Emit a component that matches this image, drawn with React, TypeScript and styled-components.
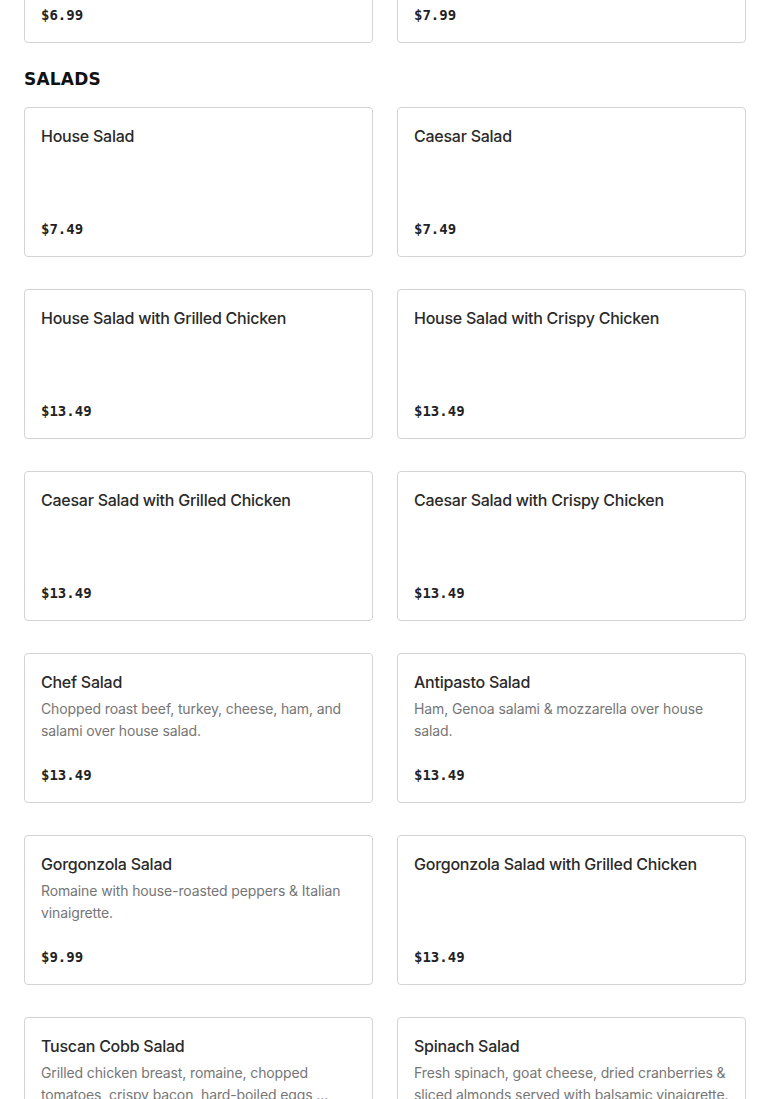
import React from "react";
import styled, { createGlobalStyle } from "styled-components";

const GlobalStyle = createGlobalStyle`
  html, body {
    margin: 0;
    padding: 0;
    background: #ffffff;
  }
  * {
    box-sizing: border-box;
  }
`;

const MenuWrapper = styled.div`
  width: 100%;
  padding: 0 24px 40px;
  margin-top: -107px;
  font-family: Inter, "Liberation Sans", sans-serif;
`;

const Section = styled.section`
  & + & {
    margin-top: 24px;
  }
`;

const SectionTitle = styled.h2`
  margin: 0 0 16px;
  font-family: "DejaVu Sans", "Liberation Sans", sans-serif;
  font-weight: 800;
  font-size: 17px;
  line-height: 24px;
  letter-spacing: 0.2px;
  color: #111111;
`;

const ItemGrid = styled.div`
  display: grid;
  grid-template-columns: 1fr 1fr;
  column-gap: 24px;
  row-gap: 32px;
`;

const ItemCard = styled.div`
  height: 150px;
  display: flex;
  flex-direction: column;
  padding: 16px;
  border: 1px solid #d3d3d3;
  border-radius: 4px;
  background: #ffffff;
`;

const ItemName = styled.div`
  font-weight: 500;
  font-size: 16px;
  line-height: 24px;
  letter-spacing: -0.25px;
  color: #2a2a2a;
`;

const ItemDescription = styled.div`
  margin-top: 4px;
  font-size: 14px;
  line-height: 22px;
  letter-spacing: -0.12px;
  color: #767676;
  display: -webkit-box;
  -webkit-line-clamp: 2;
  -webkit-box-orient: vertical;
  overflow: hidden;
`;

const ItemPrice = styled.div`
  margin-top: auto;
  font-family: "DejaVu Sans Mono", "Liberation Mono", monospace;
  font-weight: bold;
  font-size: 14px;
  line-height: 19px;
  margin-bottom: 1px;
  color: #222222;
`;

type MenuItem = {
  name: string;
  description?: string;
  price: string;
};

const previousItems: MenuItem[] = [
  { name: "Garlic Knots", price: "$6.99" },
  { name: "Mozzarella Sticks", price: "$7.99" },
];

const saladItems: MenuItem[] = [
  { name: "House Salad", price: "$7.49" },
  { name: "Caesar Salad", price: "$7.49" },
  { name: "House Salad with Grilled Chicken", price: "$13.49" },
  { name: "House Salad with Crispy Chicken", price: "$13.49" },
  { name: "Caesar Salad with Grilled Chicken", price: "$13.49" },
  { name: "Caesar Salad with Crispy Chicken", price: "$13.49" },
  {
    name: "Chef Salad",
    description: "Chopped roast beef, turkey, cheese, ham, and salami over house salad.",
    price: "$13.49",
  },
  {
    name: "Antipasto Salad",
    description: "Ham, Genoa salami & mozzarella over house salad.",
    price: "$13.49",
  },
  {
    name: "Gorgonzola Salad",
    description: "Romaine with house-roasted peppers & Italian vinaigrette.",
    price: "$9.99",
  },
  { name: "Gorgonzola Salad with Grilled Chicken", price: "$13.49" },
  {
    name: "Tuscan Cobb Salad",
    description:
      "Grilled chicken breast, romaine, chopped tomatoes, crispy bacon, hard-boiled eggs, avocado & gorgonzola cheese with ranch dressing.",
    price: "$13.49",
  },
  {
    name: "Spinach Salad",
    description:
      "Fresh spinach, goat cheese, dried cranberries & sliced almonds served with balsamic vinaigrette.",
    price: "$12.49",
  },
];

const ItemList: React.FC<{ items: MenuItem[] }> = ({ items }) => (
  <ItemGrid>
    {items.map((item) => (
      <ItemCard key={item.name}>
        <ItemName>{item.name}</ItemName>
        {item.description && <ItemDescription>{item.description}</ItemDescription>}
        <ItemPrice>{item.price}</ItemPrice>
      </ItemCard>
    ))}
  </ItemGrid>
);

const App: React.FC = () => {
  return (
    <>
      <GlobalStyle />
      <MenuWrapper>
        <Section>
          <ItemList items={previousItems} />
        </Section>
        <Section>
          <SectionTitle>SALADS</SectionTitle>
          <ItemList items={saladItems} />
        </Section>
      </MenuWrapper>
    </>
  );
};

export default App;
